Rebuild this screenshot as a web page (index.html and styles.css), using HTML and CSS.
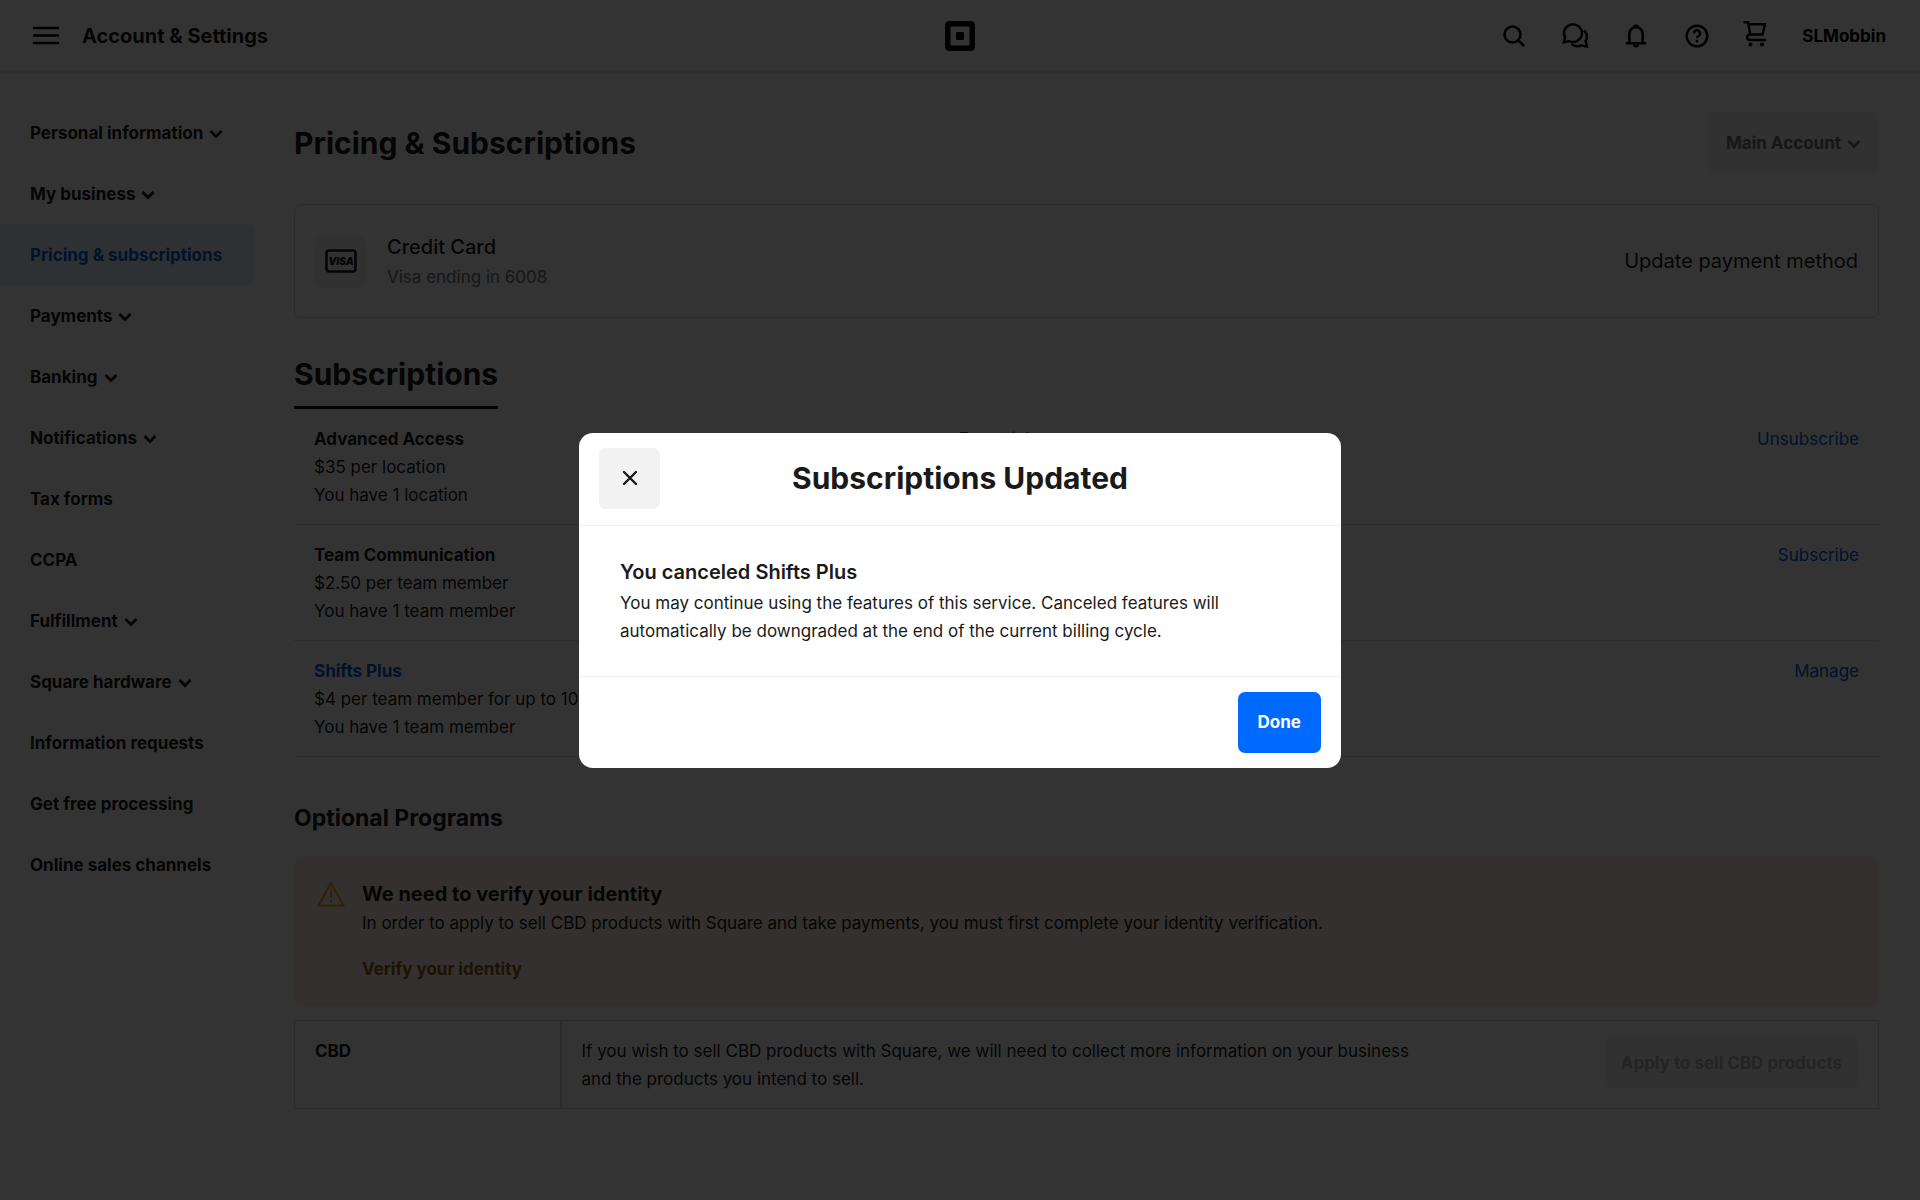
FILE: index.html
```html
<!DOCTYPE html>
<html lang="en">
<head>
    <meta charset="UTF-8">
    <meta name="viewport" content="width=device-width, initial-scale=1.0">
    <title>Pricing &amp; Subscriptions</title>
    <link rel="stylesheet" href="styles.css">
</head>
<body>

    <svg class="sprite" width="0" height="0">
        <symbol id="chevron" viewBox="0 0 14 10">
            <path d="M1.500 2L7 7.500 12.500 2" fill="none" stroke="currentColor" stroke-width="2.800"/>
        </symbol>
    </svg>

    <header class="topbar">
        <div class="topbar-left">
            <button class="icon-btn" type="button" aria-label="Menu">
                <svg width="26" height="20" viewBox="0 0 26 20"><path d="M1 2h24M1 9.500h24M1 17h24" stroke="currentColor" stroke-width="2.400" stroke-linecap="round"/></svg>
            </button>
            <span class="topbar-title">Account &amp; Settings</span>
        </div>
        <a class="logo" href="#" aria-label="Home">
            <svg width="32" height="32" viewBox="0 0 32 32">
                <path fill="currentColor" fill-rule="evenodd" d="M5.500 1H26.500A4.500 4.500 0 0 1 31 5.500V26.500A4.500 4.500 0 0 1 26.500 31H5.500A4.500 4.500 0 0 1 1 26.500V5.500A4.500 4.500 0 0 1 5.500 1ZM8 6.500A1.500 1.500 0 0 0 6.500 8V24A1.500 1.500 0 0 0 8 25.500H24A1.500 1.500 0 0 0 25.500 24V8A1.500 1.500 0 0 0 24 6.500Z"/>
                <rect x="12" y="12" width="8" height="8" rx="1" fill="currentColor"/>
            </svg>
        </a>
        <div class="topbar-right">
            <button class="icon-btn" type="button" aria-label="Search">
                <svg width="28" height="28" viewBox="0 0 28 28" fill="none" stroke="currentColor" stroke-width="2.600"><circle cx="12.500" cy="12.500" r="8"/><path d="M18.200 18.200l6 6"/></svg>
            </button>
            <button class="icon-btn" type="button" aria-label="Messages">
                <svg width="28" height="28" viewBox="0 0 28 28" fill="none" stroke="currentColor" stroke-width="2.400"><path d="M2.800 20.300l1.300-4.900a9 8.800 0 1 1 3.800 3.600z"/><path d="M23 8.500a8 8 0 0 1 1.600 10.500l1.400 5.700-5.600-1.300a9 9 0 0 1-9.900-1.600"/></svg>
            </button>
            <button class="icon-btn" type="button" aria-label="Notifications">
                <svg width="28" height="28" viewBox="0 0 28 28"><path d="M7.300 21V12.500a6.700 7.500 0 0 1 13.400 0V21M4 21.300h20" fill="none" stroke="currentColor" stroke-width="2.600"/><path d="M11 5.500a3 3 0 0 1 6 0zM11 22.500a3 3 0 0 0 6 0z" fill="currentColor"/></svg>
            </button>
            <button class="icon-btn" type="button" aria-label="Help">
                <svg width="28" height="28" viewBox="0 0 28 28" fill="none" stroke="currentColor" stroke-width="2.400"><circle cx="14" cy="14" r="10.300"/><path d="M11 11.500a3 3 0 1 1 4.600 2.400c-1.100.7-1.600 1.200-1.600 2.300"/><path d="M14 17.800v2.600"/></svg>
            </button>
            <button class="icon-btn" type="button" aria-label="Cart">
                <svg width="25" height="28" viewBox="2 2 25 28"><path d="M1.500 2.200h4.500l2.300 12.300h12.200L23 4.300H6.600M8.300 14.500c-4.200 0-4.200 5.500 0 5.500H24" fill="none" stroke="currentColor" stroke-width="2.400"/><circle cx="8.500" cy="24.500" r="2" fill="currentColor"/><circle cx="20" cy="24.500" r="2" fill="currentColor"/></svg>
            </button>
            <a class="user-name" href="#">SLMobbin</a>
        </div>
    </header>

    <div class="page">
        <nav class="sidebar">
            <a href="#">Personal information <svg class="chevron"><use href="#chevron"/></svg></a>
            <a href="#">My business <svg class="chevron"><use href="#chevron"/></svg></a>
            <a class="active" href="#">Pricing &amp; subscriptions</a>
            <a href="#">Payments <svg class="chevron"><use href="#chevron"/></svg></a>
            <a href="#">Banking <svg class="chevron"><use href="#chevron"/></svg></a>
            <a href="#">Notifications <svg class="chevron"><use href="#chevron"/></svg></a>
            <a href="#">Tax forms</a>
            <a href="#">CCPA</a>
            <a href="#">Fulfillment <svg class="chevron"><use href="#chevron"/></svg></a>
            <a href="#">Square hardware <svg class="chevron"><use href="#chevron"/></svg></a>
            <a href="#">Information requests</a>
            <a href="#">Get free processing</a>
            <a href="#">Online sales channels</a>
        </nav>

        <main class="content">
            <div class="content-head">
                <h1>Pricing &amp; Subscriptions</h1>
                <button class="account-btn" type="button">Main Account <svg class="chevron"><use href="#chevron"/></svg></button>
            </div>

            <section class="card">
                <div class="card-icon">
                    <svg width="32" height="24" viewBox="0 0 32 24">
                        <rect x="1.500" y="1.500" width="29" height="21" rx="2.500" fill="none" stroke="currentColor" stroke-width="2.600"/>
                        <text class="visa" x="16" y="16" text-anchor="middle">VISA</text>
                    </svg>
                </div>
                <div class="card-info">
                    <h3>Credit Card</h3>
                    <p>Visa ending in 6008</p>
                </div>
                <a class="card-link" href="#">Update payment method</a>
            </section>

            <h2 class="tab-title">Subscriptions</h2>
            <ul class="subscriptions">
                <li>
                    <div>
                        <strong>Advanced Access</strong>
                        <p>$35 per location</p>
                        <p>You have 1 location</p>
                    </div>
                    <span>Free trial</span>
                    <a href="#">Unsubscribe</a>
                </li>
                <li>
                    <div>
                        <strong>Team Communication</strong>
                        <p>$2.50 per team member</p>
                        <p>You have 1 team member</p>
                    </div>
                    <span></span>
                    <a href="#">Subscribe</a>
                </li>
                <li>
                    <div>
                        <strong><a href="#">Shifts Plus</a></strong>
                        <p>$4 per team member for up to 10</p>
                        <p>You have 1 team member</p>
                    </div>
                    <span></span>
                    <a href="#">Manage</a>
                </li>
            </ul>

            <h2 class="programs-title">Optional Programs</h2>
            <section class="banner">
                <svg class="warning" width="28" height="26" viewBox="0 0 28 26" fill="none" stroke="currentColor" stroke-width="2.200"><path d="M14 2L26.500 24.500H1.500z"/><path d="M14 9.500v7.500M14 19v2.500"/></svg>
                <div>
                    <h3>We need to verify your identity</h3>
                    <p>In order to apply to sell CBD products with Square and take payments, you must first complete your identity verification.</p>
                    <a href="#">Verify your identity</a>
                </div>
            </section>

            <table class="programs">
                <tr>
                    <th scope="row">CBD</th>
                    <td><p>If you wish to sell CBD products with Square, we will need to collect more information on your business and the products you intend to sell.</p></td>
                    <td class="action"><button type="button" disabled>Apply to sell CBD products</button></td>
                </tr>
            </table>
        </main>
    </div>

    <div class="overlay">
        <div class="modal" role="dialog" aria-labelledby="modalTitle">
            <div class="modal-head">
                <button class="close-btn" type="button" aria-label="Close">
                    <svg width="16" height="16" viewBox="0 0 16 16"><path d="M2 2l12 12M14 2L2 14" stroke="currentColor" stroke-width="2.400" stroke-linecap="round"/></svg>
                </button>
                <h2 id="modalTitle">Subscriptions Updated</h2>
            </div>
            <div class="modal-body">
                <h3>You canceled Shifts Plus</h3>
                <p>You may continue using the features of this service. Canceled features will automatically be downgraded at the end of the current billing cycle.</p>
            </div>
            <div class="modal-foot">
                <button class="done-btn" type="button">Done</button>
            </div>
        </div>
    </div>

</body>
</html>
```
FILE: styles.css
```css
* {
    box-sizing: border-box;
}

body {
    margin: 0;
    min-height: 100vh;
    color: #1a1a1a;
    background: #fff;
    font-family: Inter, "Liberation Sans", sans-serif;
    font-size: 17px;
    line-height: 28px;
}

h1, h2, h3, p, ul {
    margin: 0;
    padding: 0;
}

a {
    color: #005ad9;
    text-decoration: none;
}

button {
    font-family: inherit;
    font-size: 17px;
    font-weight: 700;
    border: none;
    border-radius: 7px;
    cursor: pointer;
}

svg {
    display: block;
}

.sprite {
    position: absolute;
}

.chevron {
    width: 14px;
    height: 10px;
    margin-top: 3px;
}

/* top bar */
.topbar {
    display: grid;
    grid-template-columns: 1fr auto 1fr;
    align-items: center;
    height: 73px;
    padding: 0 34px 0 33px;
    border-bottom: 2px solid #e6e6e6;
}

.topbar-left {
    display: flex;
    align-items: center;
    gap: 23px;
}

.topbar-title {
    font-size: 20px;
    font-weight: 700;
}

.icon-btn {
    padding: 0;
    color: #000;
    background: none;
}

.icon-btn svg {
    overflow: visible;
}

.logo {
    color: #000;
}

.topbar-right {
    display: flex;
    align-items: center;
    justify-content: flex-end;
    gap: 33px;
}

.user-name {
    color: #000;
    font-weight: 700;
}

/* layout */
.page {
    display: flex;
    padding: 29px 41px 0 0;
}

.sidebar {
    flex: 0 0 255px;
    margin-right: 39px;
}

.sidebar a {
    display: flex;
    align-items: center;
    gap: 6px;
    height: 61px;
    padding-left: 30px;
    color: #1a1a1a;
    font-weight: 700;
    border-radius: 0 7px 7px 0;
}

.sidebar a.active {
    color: #005ad9;
    background: #e0f2ff;
}

.content {
    flex: 1;
    padding-top: 10px;
}

.content-head {
    display: flex;
    align-items: center;
    justify-content: space-between;
    margin-bottom: 31px;
}

h1, .tab-title, .modal-head h2 {
    font-size: 30px;
    font-weight: 700;
    line-height: 40px;
}

.account-btn {
    display: flex;
    align-items: center;
    gap: 6px;
    height: 61px;
    padding: 0 18px;
    color: #737373;
    background: #f2f2f2;
}

/* payment card */
.card {
    display: flex;
    align-items: center;
    height: 114px;
    padding: 0 20px;
    border: 1px solid #d9d9d9;
    border-radius: 7px;
}

.card-icon {
    display: flex;
    align-items: center;
    justify-content: center;
    width: 51px;
    height: 51px;
    margin-right: 21px;
    background: #f2f2f2;
    border-radius: 7px;
}

.visa {
    fill: currentColor;
    font-size: 10px;
    font-style: italic;
    font-weight: 900;
}

.card-info {
    flex: 1;
}

.card-info h3 {
    font-size: 20px;
    font-weight: 500;
    line-height: 32px;
}

.card-info p {
    color: #737373;
}

.card-link {
    color: #1a1a1a;
    font-size: 20px;
}

/* subscriptions */
.tab-title {
    width: fit-content;
    margin-top: 36px;
    padding-bottom: 12px;
    border-bottom: 3px solid #1a1a1a;
}

.subscriptions {
    list-style: none;
}

.subscriptions li {
    display: grid;
    grid-template-columns: 645px 1fr auto;
    padding: 16px 20px 15px;
    border-bottom: 1px solid #d9d9d9;
}

.subscriptions strong {
    font-weight: 700;
}

/* optional programs */
.programs-title {
    margin: 46px 0 24px;
    font-size: 23px;
    font-weight: 700;
    line-height: 30px;
}

.banner {
    display: flex;
    gap: 17px;
    padding: 22px 23px 23px;
    margin-bottom: 14px;
    background: #fff1e9;
    border-radius: 7px;
}

.warning {
    flex: none;
    margin-top: 2px;
    color: #ff9f2e;
}

.banner h3 {
    font-size: 20px;
    font-weight: 700;
    line-height: 30px;
}

.banner a {
    display: block;
    margin-top: 18px;
    color: #8f6118;
    font-weight: 700;
}

.programs {
    width: 100%;
    border: 1px solid #d9d9d9;
    border-collapse: collapse;
}

.programs th, .programs td {
    padding: 16px 20px 15px;
    text-align: left;
    vertical-align: top;
}

.programs th {
    width: 266px;
    font-weight: 700;
    border-right: 2px solid #d9d9d9;
}

.programs p {
    max-width: 860px;
}

.programs .action {
    text-align: right;
}

.programs button {
    height: 51px;
    padding: 0 16px;
    color: #b3b3b3;
    background: #f2f2f2;
}

/* dialog */
.overlay {
    position: fixed;
    inset: 0;
    display: flex;
    align-items: center;
    justify-content: center;
    background: rgba(0, 0, 0, 0.8);
}

.modal {
    width: 762px;
    background: #fff;
    border-radius: 14px;
}

.modal-head {
    display: grid;
    grid-template-columns: 61px 1fr 61px;
    align-items: center;
    padding: 15px 20px 16px;
    border-bottom: 1px solid #f0f0f0;
}

.modal-head h2 {
    text-align: center;
}

.close-btn {
    display: flex;
    align-items: center;
    justify-content: center;
    width: 61px;
    height: 61px;
    color: #1a1a1a;
    background: #f2f2f2;
}

.modal-body {
    padding: 30px 41px 31px;
}

.modal-body h3 {
    font-size: 20px;
    font-weight: 600;
    line-height: 33px;
}

.modal-foot {
    display: flex;
    justify-content: flex-end;
    padding: 15px 20px;
    border-top: 1px solid #f0f0f0;
}

.done-btn {
    height: 61px;
    padding: 0 20px;
    color: #fff;
    background: #006aff;
}
```
